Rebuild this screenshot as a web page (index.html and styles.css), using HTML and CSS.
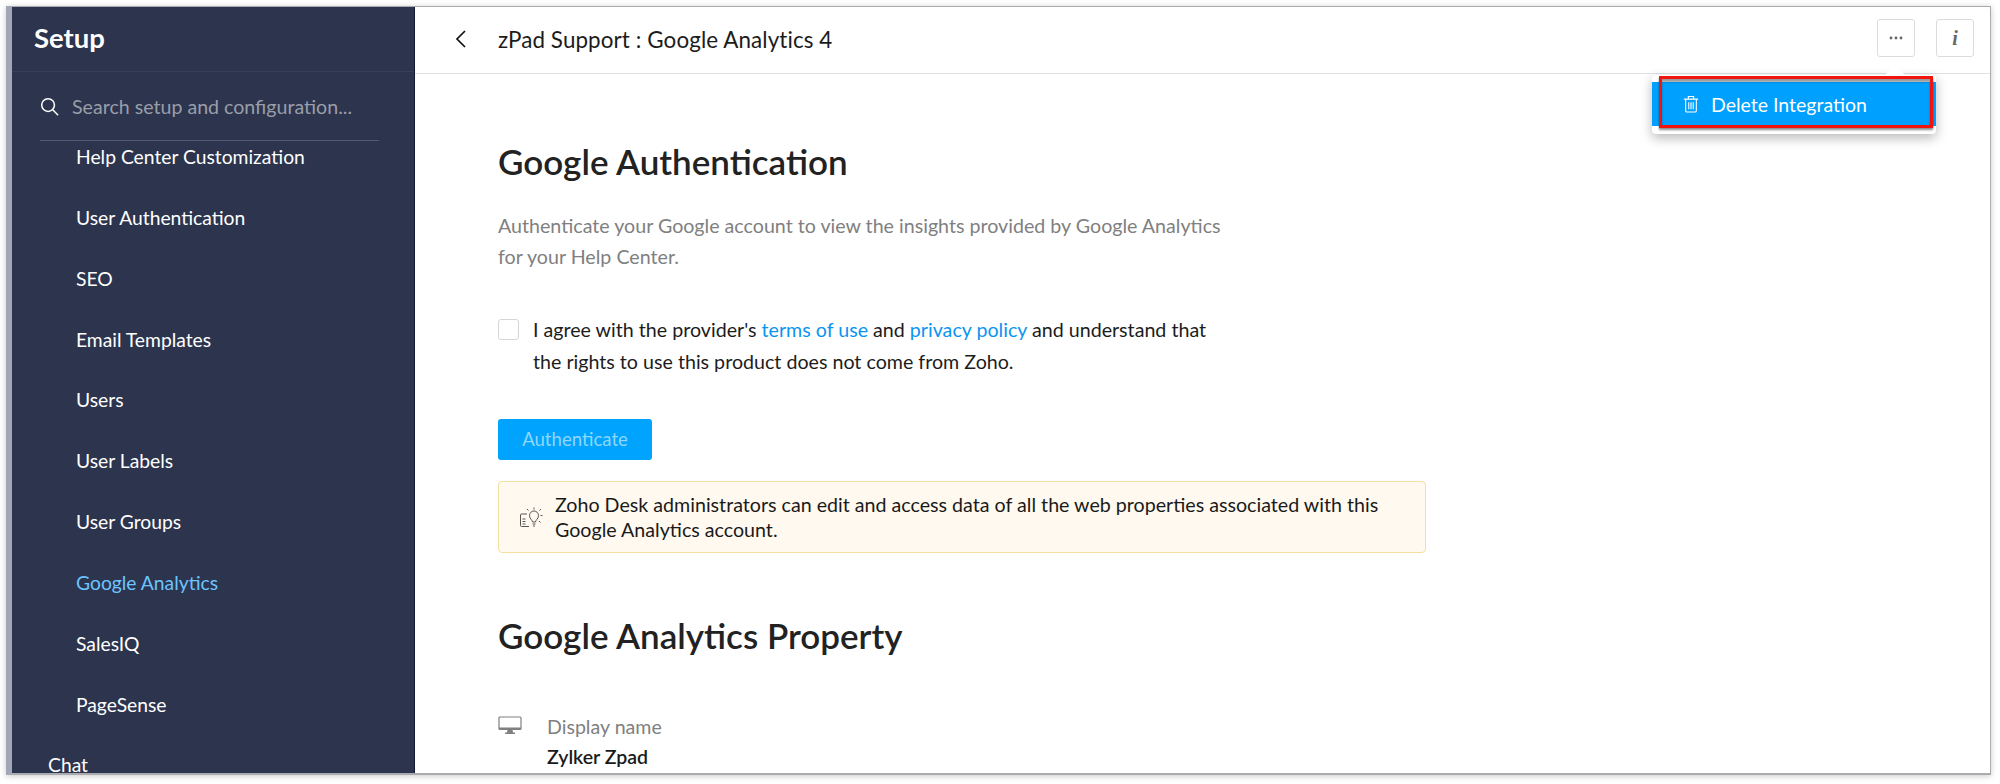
FILE: index.html
```html
<!DOCTYPE html>
<html lang="en">
<head>
<meta charset="utf-8">
<title>zPad Support : Google Analytics 4</title>
<link rel="stylesheet" href="styles.css">
</head>
<body>
<div class="frame">
  <aside class="sidebar">
    <div class="side-title">Setup</div>
    <div class="search">
      <svg class="search-icon" viewBox="0 0 20 20" fill="none" stroke="#fff" stroke-width="1.6" stroke-linecap="round"><circle cx="8.5" cy="8.5" r="6.7"/><path d="M13.4 13.4 18.6 18.6"/></svg>
      <span>Search setup and configuration...</span>
    </div>
    <nav class="nav">
      <a class="item">Help Center Customization</a>
      <a class="item">User Authentication</a>
      <a class="item">SEO</a>
      <a class="item">Email Templates</a>
      <a class="item">Users</a>
      <a class="item">User Labels</a>
      <a class="item">User Groups</a>
      <a class="item active">Google Analytics</a>
      <a class="item">SalesIQ</a>
      <a class="item">PageSense</a>
      <a class="item top">Chat</a>
    </nav>
  </aside>
  <main class="main">
    <header class="topbar">
      <svg class="back" viewBox="0 0 12 20" fill="none" stroke="#111" stroke-width="1.7"><path d="M10 2 2 10l8 8"/></svg>
      <div class="page-title">zPad Support : Google Analytics 4</div>
      <button class="tool"><svg viewBox="0 0 14 4" width="14" height="4" fill="#666"><circle cx="2" cy="2" r="1.4"/><circle cx="7" cy="2" r="1.4"/><circle cx="12" cy="2" r="1.4"/></svg></button>
      <button class="tool info">i</button>
    </header>
    <section class="content">
      <h1>Google Authentication</h1>
      <p class="desc">Authenticate your Google account to view the insights provided by Google Analytics<br>for your Help Center.</p>
      <div class="agree">
        <span class="check"></span>
        <p>I agree with the provider's <a>terms of use</a> and <a>privacy policy</a> and understand that<br>the rights to use this product does not come from Zoho.</p>
      </div>
      <button class="auth">Authenticate</button>
      <div class="notice">
        <svg class="bulb" viewBox="0 0 24 24" fill="none" stroke="#555" stroke-width="1"><path d="M8 9H2.500a1 1 0 0 0-1 1v10.500a1 1 0 0 0 1 1h7.500"/><path d="M3.500 14h3M3.500 16.500h3M3.500 19h3"/><path d="M13.500 17c0-2-3-3-3-6.500a4.500 4.500 0 0 1 9 0c0 3.500-3 4.500-3 6.500z"/><path d="M13.500 19h3M14 21h2"/><path d="M15 2.500v2M8 4l1.500 1.500M22 4l-1.500 1.500M21.500 10.500h2M20 16l1.500 1.500"/></svg>
        <p>Zoho Desk administrators can edit and access data of all the web properties associated with this<br>Google Analytics account.</p>
      </div>
      <h2>Google Analytics Property</h2>
      <div class="prop">
        <svg class="monitor" viewBox="0 0 24 18"><path fill="none" stroke="#808080" stroke-width="1.200" d="M2 1h20a1 1 0 0 1 1 1v11H1V2a1 1 0 0 1 1-1z"/><path fill="#808080" d="M1 11.500h22V13a1 1 0 0 1-1 1H2a1 1 0 0 1-1-1zM9.500 14h5l.5 2.500h2V18H7v-1.500h2z"/></svg>
        <div>
          <div class="prop-label">Display name</div>
          <div class="prop-value">Zylker Zpad</div>
        </div>
      </div>
    </section>
    <div class="popup">
      <span class="arrow"></span>
      <div class="popup-row">
        <svg class="trash" viewBox="0 0 18 20" fill="none" stroke="#fff" stroke-width="1.200"><path d="M1 4.500h16M6 4.500V1.500h6v3M3 4.500V17.500a1.500 1.500 0 0 0 1.500 1.500h9a1.500 1.500 0 0 0 1.500-1.500V4.500M6.500 8v8M9 8v8M11.500 8v8"/></svg>
        <span>Delete Integration</span>
      </div>
    </div>
  </main>
</div>
</body>
</html>
```
FILE: styles.css
```css
*, *::before, *::after { box-sizing: border-box; }
html, body { margin: 0; height: 100%; background: #fff; overflow: hidden; }
body { padding: 6px 9px 10px 6px; font-family: Lato, "Noto Sans", sans-serif; color: #1a1a1a; }
p, h1, h2 { margin: 0; }

.frame {
  display: flex;
  height: 769px;
  border: 1px solid #a9abae;
  border-left: 6px solid #a2a7b8;
  border-bottom-width: 2px;
  box-shadow: 0 1px 6px rgba(0, 0, 0, .22);
  background: #fff;
  overflow: hidden;
}

.sidebar {
  width: 403px;
  flex: none;
  background: #2c344e;
  color: #fff;
  overflow: hidden;
  border-right: 1px solid #141a38;
}
.side-title {
  height: 65px;
  padding: 10px 0 0 22px;
  font-size: 27.500px;
  line-height: 42px;
  font-weight: 700;
  border-bottom: 1px solid #384059;
}
.search {
  display: flex;
  align-items: center;
  gap: 13px;
  height: 69px;
  margin: 0 35px 0 28px;
  border-bottom: 1px solid #535a71;
  color: #9a9ea9;
  font-size: 19.600px;
}
.search-icon { width: 19px; height: 19px; flex: none; }
.nav { display: flex; flex-direction: column; padding-top: 1px; }
.item {
  display: block;
  height: 60.850px;
  padding-left: 64px;
  font-size: 19.300px;
  line-height: 30px;
  white-space: nowrap;
  color: #fff;
}
.item.active { color: #6cc4ff; }
.item.top { padding-left: 36px; height: 30px; }

.main { position: relative; flex: 1; min-width: 0; overflow: hidden; }
.topbar {
  display: flex;
  align-items: center;
  height: 67px;
  padding: 0 16px 4px 40px;
  border-bottom: 1px solid #e1e2e4;
}
.back { width: 12px; height: 20px; flex: none; margin-top: 2px; }
.page-title { flex: 1; margin-left: 31px; padding-top: 2px; font-size: 22.400px; letter-spacing: .1px; color: #1c1c1c; }
.tool {
  display: flex;
  align-items: center;
  justify-content: center;
  width: 38px;
  height: 38px;
  margin-left: 21px;
  padding: 0;
  background: #fff;
  border: 1px solid #dcdcdc;
  border-radius: 3px;
}
.info { font-family: "Liberation Serif", serif; font-style: italic; font-weight: 700; font-size: 20px; color: #666; }

.content { padding: 64.500px 0 0 83px; }
h1, h2 { font-size: 35px; line-height: 44px; font-weight: 600; color: #222; }
.desc { margin-top: 27px; font-size: 19.650px; line-height: 31px; color: #808080; }
.agree { display: flex; align-items: flex-start; margin-top: 42px; }
.check {
  flex: none;
  width: 21px;
  height: 21px;
  margin: 5px 14px 0 0;
  border: 1px solid #d6d6d6;
  border-radius: 3px;
}
.agree p { font-size: 19.650px; line-height: 32px; color: #1c1c1c; }
.agree a { color: #0a94f0; }
.auth {
  display: block;
  width: 154px;
  height: 41px;
  margin-top: 41px;
  padding: 0;
  border: 0;
  border-radius: 3px;
  background: #00a3fe;
  color: #8fd7fb;
  font: 18.600px Lato, sans-serif;
}
.notice {
  display: flex;
  align-items: center;
  width: 928px;
  height: 72px;
  margin-top: 21px;
  padding-left: 20px;
  background: #fff9ef;
  border: 1px solid #f3e0a0;
  border-radius: 4px;
}
.bulb { width: 24px; height: 24px; flex: none; margin-right: 12px; }
.notice p { font-size: 19.650px; line-height: 25px; color: #1a1a1a; }
h2 { margin-top: 60px; }
.prop { display: flex; align-items: flex-start; margin-top: 55.500px; }
.monitor { width: 24px; height: 18px; flex: none; margin: 3.500px 25px 0 0; }
.prop-label { font-size: 19.600px; line-height: 30px; color: #808080; }
.prop-value { font-size: 19.500px; line-height: 30px; font-weight: 600; color: #1a1a1a; }

.popup {
  position: absolute;
  top: 68px;
  left: 1237px;
  width: 284px;
  height: 59px;
  padding-top: 7px;
  background: #fff;
  border-radius: 4px;
  box-shadow: 0 4px 12px rgba(0, 0, 0, .28);
}
.arrow {
  position: absolute;
  top: -7px;
  right: 34px;
  width: 14px;
  height: 14px;
  background: #fff;
  transform: rotate(45deg);
}
.popup-row {
  position: relative;
  display: flex;
  align-items: center;
  gap: 12px;
  height: 44px;
  padding-left: 31px;
  background: #00a0ff;
  color: #fff;
  font-size: 19.500px;
}
.popup-row::after {
  content: "";
  position: absolute;
  top: -6px;
  left: 7px;
  width: 274px;
  height: 52px;
  border: 3px solid #f2140f;
  box-shadow: 0 2px 2px rgba(0, 0, 0, .45), inset 0 3px 2px rgba(0, 0, 0, .4);
}
.trash { width: 16px; height: 18px; flex: none; }
```
